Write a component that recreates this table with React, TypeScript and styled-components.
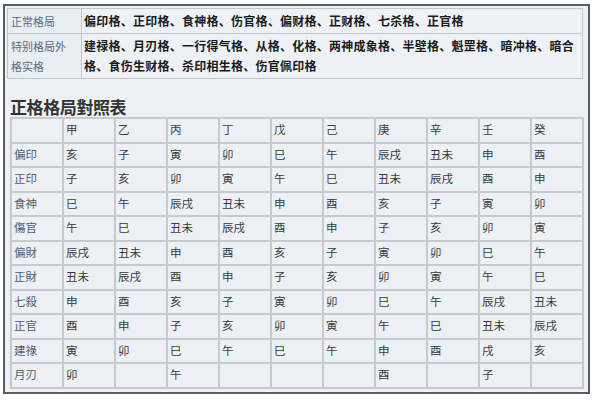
import React from 'react'
import styled, { createGlobalStyle } from 'styled-components'

const GlobalStyle = createGlobalStyle`
    html, body {
        margin: 0;
        padding: 0;
        background: #ffffff;
    }
    body {
        font-family: "Noto Sans CJK SC", "Noto Sans", sans-serif;
        color: #333;
    }
`;

const Frame = styled.div`
    box-sizing: border-box;
    margin: 4px 0 0 3px;
    width: 587px;
    height: 390px;
    border: 2px solid #5a5d60;
    background: #edf1f5;
    padding: 2px 5px 0 2px;
`;

const InfoTable = styled.table`
    width: 100%;
    border-collapse: collapse;
    border: 1px solid #c2c7cc;
`;

const InfoLabel = styled.td`
    width: 68px;
    padding: 2px 2px 2px 3px;
    border: 1px solid #c2c7cc;
    background: #e9eef3;
    color: #5b6b7c;
    font-size: 11px;
    line-height: 20px;
    vertical-align: top;
`;

const InfoText = styled.td`
    padding: 2px;
    border: 1px solid #c2c7cc;
    background: #eef2f7;
    color: #1a1a1a;
    font-weight: 700;
    font-size: 12px;
    letter-spacing: 0.25px;
    line-height: 20px;
    white-space: nowrap;
`;

const Title = styled.h3`
    margin: 17px 0 0 3px;
    font-size: 17px;
    line-height: 21px;
    font-weight: 700;
    color: #333;
    letter-spacing: -0.4px;
`;

const Grid = styled.table`
    margin-left: 3px;
    width: 574px;
    border-collapse: collapse;
    table-layout: fixed;
    border: 2px solid #c6cacd;
`;

const Cell = styled.td<{ $head?: boolean }>`
    height: 24.5px;
    box-sizing: border-box;
    padding: 0 0 2px 2px;
    border: 2px solid #c6cacd;
    font-size: 11.5px;
    line-height: 14px;
    color: ${p => (p.$head ? '#4f5f70' : '#3a3a3a')};
    vertical-align: middle;
    white-space: nowrap;
`;

const stems = ['甲', '乙', '丙', '丁', '戊', '己', '庚', '辛', '壬', '癸'];

const rows: { label: string, cells: string[] }[] = [
    { label: '偏印', cells: ['亥', '子', '寅', '卯', '巳', '午', '辰戌', '丑未', '申', '酉'] },
    { label: '正印', cells: ['子', '亥', '卯', '寅', '午', '巳', '丑未', '辰戌', '酉', '申'] },
    { label: '食神', cells: ['巳', '午', '辰戌', '丑未', '申', '酉', '亥', '子', '寅', '卯'] },
    { label: '傷官', cells: ['午', '巳', '丑未', '辰戌', '酉', '申', '子', '亥', '卯', '寅'] },
    { label: '偏財', cells: ['辰戌', '丑未', '申', '酉', '亥', '子', '寅', '卯', '巳', '午'] },
    { label: '正財', cells: ['丑未', '辰戌', '酉', '申', '子', '亥', '卯', '寅', '午', '巳'] },
    { label: '七殺', cells: ['申', '酉', '亥', '子', '寅', '卯', '巳', '午', '辰戌', '丑未'] },
    { label: '正官', cells: ['酉', '申', '子', '亥', '卯', '寅', '午', '巳', '丑未', '辰戌'] },
    { label: '建祿', cells: ['寅', '卯', '巳', '午', '巳', '午', '申', '酉', '戌', '亥'] },
    { label: '月刃', cells: ['卯', '', '午', '', '', '', '酉', '', '子', ''] },
];

export default function App() {
    return (
        <>
            <GlobalStyle />
            <Frame>
                <InfoTable>
                    <tbody>
                        <tr>
                            <InfoLabel>正常格局</InfoLabel>
                            <InfoText>偏印格、正印格、食神格、伤官格、偏财格、正财格、七杀格、正官格</InfoText>
                        </tr>
                        <tr>
                            <InfoLabel>特别格局外<br />格实格</InfoLabel>
                            <InfoText>
                                建禄格、月刃格、一行得气格、从格、化格、两神成象格、半壁格、魁罡格、暗冲格、暗合<br />
                                格、食伤生财格、杀印相生格、伤官佩印格
                            </InfoText>
                        </tr>
                    </tbody>
                </InfoTable>

                <Title>正格格局對照表</Title>

                <Grid>
                    <tbody>
                        <tr>
                            <Cell $head></Cell>
                            {stems.map((s, idx) => <Cell key={idx}>{s}</Cell>)}
                        </tr>
                        {rows.map((row, idx) => (
                            <tr key={idx}>
                                <Cell $head>{row.label}</Cell>
                                {row.cells.map((c, i) => <Cell key={i}>{c}</Cell>)}
                            </tr>
                        ))}
                    </tbody>
                </Grid>
            </Frame>
        </>
    )
}
